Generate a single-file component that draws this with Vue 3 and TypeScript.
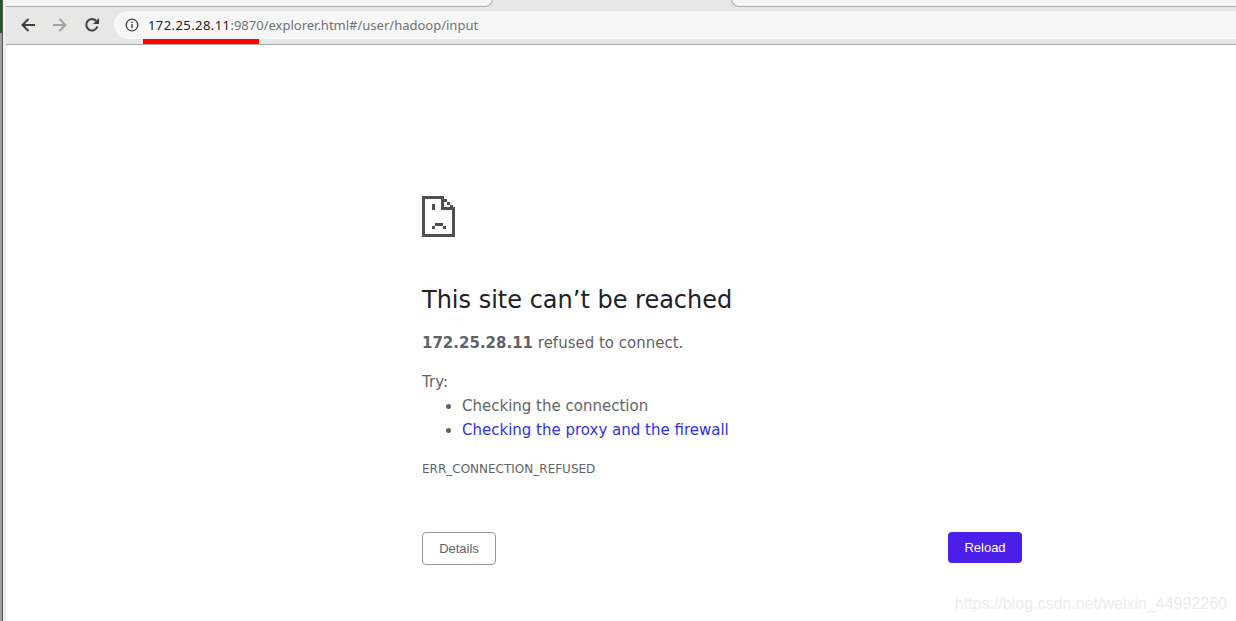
<script setup lang="ts">
const tries: { text: string; link?: boolean }[] = [
  { text: 'Checking the connection' },
  { text: 'Checking the proxy and the firewall', link: true },
]
</script>

<template>
  <div class="screen">
    <div class="edge"><div class="edge-green"></div></div>
    <div class="browser">
      <div class="tabstrip">
        <div class="tab tab-a"></div>
        <div class="tab tab-b"></div>
      </div>
      <div class="toolbar">
        <button class="nav" aria-label="Back">
          <svg width="16" height="16" viewBox="0 0 16 16"><path d="M15 8H3M8.500 2 2.500 8l6 6" fill="none" stroke="#3c4043" stroke-width="2"/></svg>
        </button>
        <button class="nav" aria-label="Forward">
          <svg width="16" height="16" viewBox="0 0 16 16"><path d="M1 8h12M7.500 2l6 6-6 6" fill="none" stroke="#a0a2a4" stroke-width="2"/></svg>
        </button>
        <button class="nav" aria-label="Reload">
          <svg width="16" height="16" viewBox="0 0 16 16"><path d="M13.400 9.500A5.700 5.700 0 1 1 12.200 4" fill="none" stroke="#3c4043" stroke-width="2"/><path d="M15 1v6H9z" fill="#3c4043"/></svg>
        </button>
        <div class="omnibox">
          <svg class="info" width="14" height="14" viewBox="0 0 14 14"><circle cx="7" cy="7" r="5.800" fill="none" stroke="#3c4043" stroke-width="1.300"/><path d="M6.300 6h1.400v4.200H6.300zM6.300 3.600h1.400V5H6.300z" fill="#3c4043"/></svg>
          <span class="url"><span class="host">172.25.28.11</span>:9870/explorer.html#/user/hadoop/input</span>
          <div class="mark"></div>
        </div>
      </div>
      <main class="page">
        <div class="content">
          <svg class="sad" width="33" height="41" viewBox="0 0 33 41" shape-rendering="crispEdges" fill="#505050">
            <path d="M0 0h22v3H3v35h27V14h3v27H0z"/>
            <path d="M19 0h3v11h11v3H19z"/>
            <path d="M22 3h3v3h-3zM25 6h3v3h-3zM28 9h3v2h-3z"/>
            <path d="M10 8h3v6h-3zM13 27h8v3h-8zM10 30h3v3h-3zM21 30h3v3h-3z"/>
          </svg>
          <h1>This site can’t be reached</h1>
          <p class="summary"><strong>172.25.28.11</strong> refused to connect.</p>
          <p class="try">Try:</p>
          <ul>
            <li v-for="item in tries" :key="item.text">
              <a v-if="item.link" href="#">{{ item.text }}</a>
              <template v-else>{{ item.text }}</template>
            </li>
          </ul>
          <p class="code">ERR_CONNECTION_REFUSED</p>
          <div class="actions">
            <button class="details">Details</button>
            <button class="reload">Reload</button>
          </div>
        </div>
        <div class="watermark">https://blog.csdn.net/weixin_44992260</div>
      </main>
    </div>
  </div>
</template>

<style>
html, body { margin: 0; overflow: hidden; background: #fff; }
</style>

<style scoped>
.screen {
  width: 1236px;
  height: 621px;
  display: flex;
  overflow: hidden;
  font-family: "DejaVu Sans", sans-serif;
}
.edge {
  position: relative;
  width: 6px;
  flex: none;
  box-sizing: border-box;
  background: #eeeeee;
  border-left: 2px solid #a0a0a0;
  border-right: 1px solid #eeeeee;
  box-shadow: inset 1px 0 0 #555;
}
.edge-green {
  position: absolute;
  left: -2px;
  top: 0;
  width: 2px;
  height: 33px;
  background: #1d5a34;
}
.browser { flex: 1; display: flex; flex-direction: column; min-width: 0; }
.tabstrip {
  height: 11px;
  flex: none;
  background: #e7e7e5;
  position: relative;
  overflow: hidden;
}
.tab {
  position: absolute;
  top: -10px;
  height: 17px;
  background: #f6f6f6;
  border: 1px solid #aaa;
  box-sizing: border-box;
}
.tab-a { left: 0; width: 487px; border-left: 0; border-radius: 0 0 8px 0; }
.tab-b { left: 725px; width: 511px; border-right: 0; border-radius: 0 0 0 8px; }
.toolbar {
  height: 28px;
  flex: none;
  background: #e7e7e5;
  border-bottom: 1px solid #a8a8a8;
  padding-bottom: 5px;
  display: flex;
  align-items: center;
}
.nav {
  width: 32px;
  height: 28px;
  padding: 0;
  border: 0;
  background: transparent;
  display: flex;
  align-items: center;
  justify-content: center;
  flex: none;
}
.nav:first-child { margin-left: 6px; }
.omnibox {
  position: relative;
  flex: 1;
  height: 28px;
  margin-left: 6px;
  background: #f7f7f7;
  border-radius: 14px 0 0 14px;
  display: flex;
  align-items: center;
  padding-left: 11px;
}
.info { flex: none; }
.url {
  margin-left: 9px;
  font-family: "Noto Sans", sans-serif;
  font-size: 13px;
  color: #6f7276;
  white-space: nowrap;
}
.host { color: #202124; letter-spacing: 0.42px; }
.mark {
  position: absolute;
  left: 29px;
  top: 28px;
  width: 116px;
  height: 5px;
  background: #ff0000;
}
.page {
  flex: 1;
  position: relative;
  background: #fff;
  min-height: 0;
}
.content {
  width: 600px;
  margin-left: 416px;
  padding-top: 151px;
  color: #5f6368;
  font-size: 15px;
}
.sad { display: block; }
h1 {
  margin: 48px 0 0;
  font-size: 24px;
  line-height: 30px;
  font-weight: 400;
  color: #202124;
}
.summary { margin: 16px 0 0; line-height: 24px; }
.try { margin: 15px 0 0; line-height: 24px; }
ul { margin: 0; padding-left: 40px; }
li { line-height: 24px; }
a { color: #3030ee; text-decoration: none; }
.code {
  margin: 19px 0 0;
  font-size: 12px;
  line-height: 16px;
}
.actions {
  margin-top: 55px;
  display: flex;
  justify-content: space-between;
  align-items: flex-start;
}
button { font-family: "Liberation Sans", sans-serif; font-size: 13px; }
.details {
  width: 74px;
  height: 33px;
  background: #fff;
  color: #5f6368;
  border: 1px solid #9a9a9e;
  border-radius: 4px;
}
.reload {
  width: 74px;
  height: 31px;
  background: #4a1fe8;
  color: #fff;
  border: 0;
  border-radius: 4px;
}
.watermark {
  position: absolute;
  right: 9px;
  bottom: 8px;
  font-family: "Liberation Sans", sans-serif;
  font-size: 16px;
  color: #ececec;
}
</style>
